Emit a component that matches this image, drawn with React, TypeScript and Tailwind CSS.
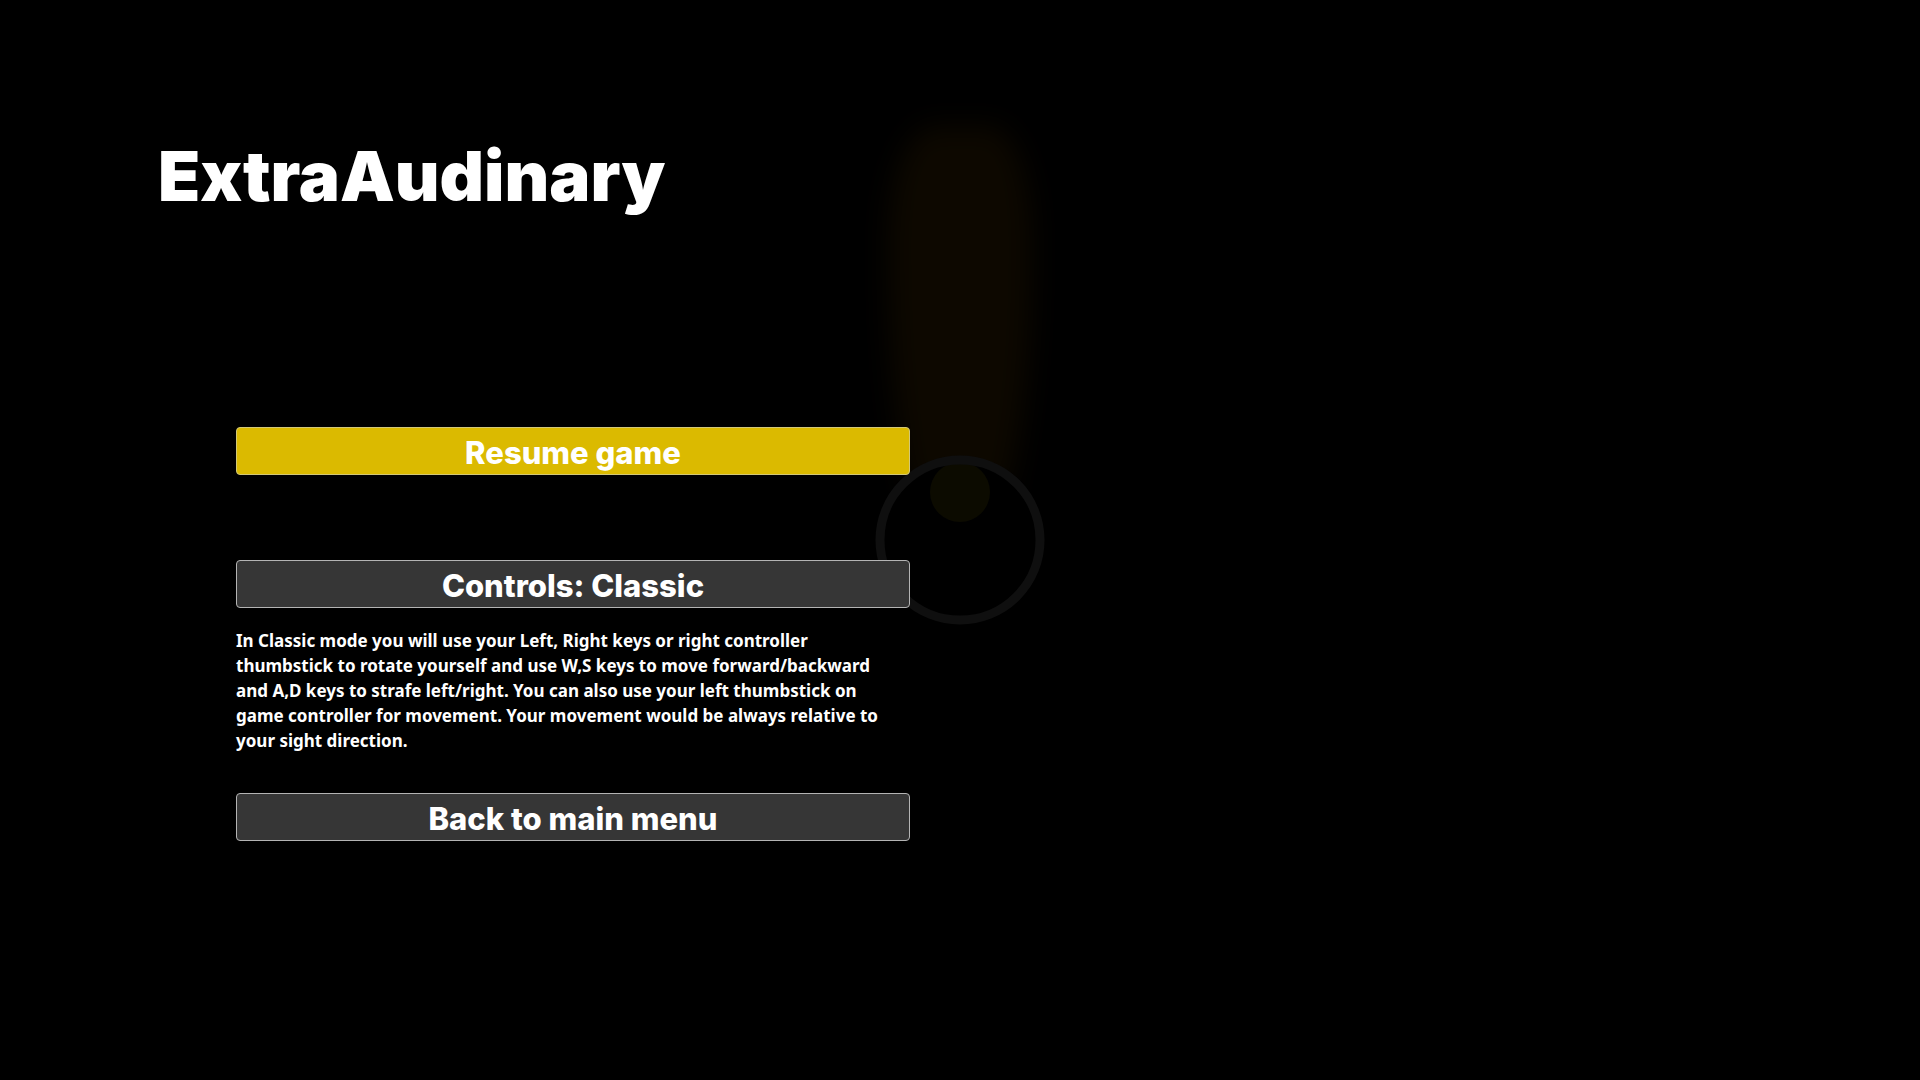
import type { ReactNode } from 'react';

function MenuButton({ primary = false, children }: { primary?: boolean; children: ReactNode }) {
  return (
    <button
      type="button"
      className={
        primary
          ? "flex h-12 w-full items-center justify-center rounded border border-[#d3c877] bg-[#dbba00] pt-0.5 font-['Inter',sans-serif] text-[31px] leading-none font-extrabold text-white"
          : "flex h-12 w-full items-center justify-center rounded border border-[#b4b4b4] bg-[#363636] pt-0.5 font-['Inter',sans-serif] text-[31px] leading-none font-extrabold text-white"
      }
    >
      {children}
    </button>
  );
}

function DimmedScene() {
  return (
    <svg
      className="pointer-events-none absolute top-1/2 left-1/2 h-[1080px] w-80 -translate-x-1/2 -translate-y-1/2"
      viewBox="0 0 320 1080"
      aria-hidden="true"
    >
      <defs>
        <filter
          id="beam-blur"
          x="-50%"
          y="-20%"
          width="200%"
          height="140%"
          colorInterpolationFilters="sRGB"
        >
          <feGaussianBlur stdDeviation="14" />
        </filter>
      </defs>
      <path
        d="M128 126H196Q232 150 232 250Q232 390 208 490H110Q88 390 88 250Q88 150 128 126Z"
        fill="#0d0800"
        filter="url(#beam-blur)"
      />
      <circle cx="160" cy="540" r="78" fill="#000" />
      <circle cx="160" cy="492" r="30" fill="#0c0b00" />
      <circle cx="160" cy="540" r="80" fill="none" stroke="#0f0f0f" strokeWidth="9" />
    </svg>
  );
}

export default function App() {
  return (
    <main className="relative min-h-screen overflow-hidden bg-black px-[158px] pt-[129px] pb-20 font-['Noto_Sans',sans-serif] text-white">
      <DimmedScene />
      <div className="relative">
        <h1 className="font-['Inter',sans-serif] text-[69px] leading-[94px] font-black">ExtraAudinary</h1>
        <div className="ml-[78px] flex w-[674px] max-w-full flex-col pt-[204px]">
          <MenuButton primary>Resume game</MenuButton>
          <div className="mt-[85px]">
            <MenuButton>Controls: Classic</MenuButton>
          </div>
          <p className="mt-5 mb-10 text-[17px] leading-[25px] font-bold">
            In Classic mode you will use your Left, Right keys or right controller
            <br />
            thumbstick to rotate yourself and use W,S keys to move forward/backward
            <br />
            and A,D keys to strafe left/right. You can also use your left thumbstick on
            <br />
            game controller for movement. Your movement would be always relative to
            <br />
            your sight direction.
          </p>
          <MenuButton>Back to main menu</MenuButton>
        </div>
      </div>
    </main>
  );
}
